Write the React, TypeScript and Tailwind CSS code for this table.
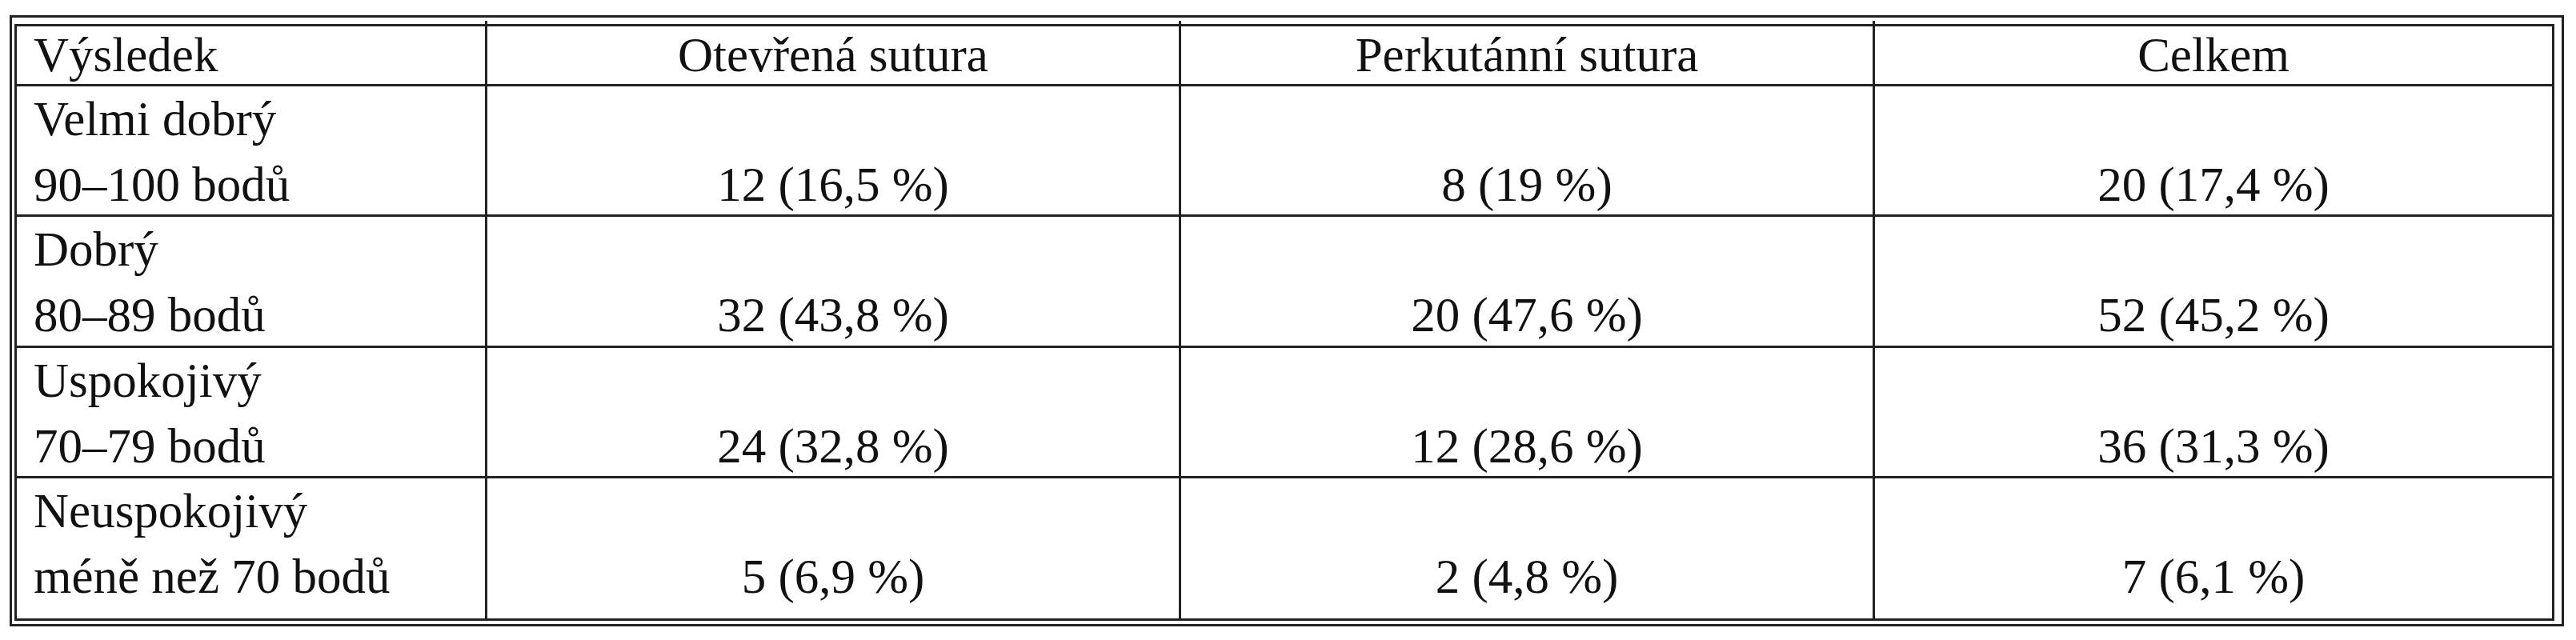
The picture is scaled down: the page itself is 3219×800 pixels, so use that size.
import { Fragment } from 'react'

type Row = {
  label: [string, string]
  values: string[]
}

const headers = ['Otevřená sutura', 'Perkutánní sutura', 'Celkem']

const rows: Row[] = [
  { label: ['Velmi dobrý', '90–100 bodů'], values: ['12 (16,5 %)', '8 (19 %)', '20 (17,4 %)'] },
  { label: ['Dobrý', '80–89 bodů'], values: ['32 (43,8 %)', '20 (47,6 %)', '52 (45,2 %)'] },
  { label: ['Uspokojivý', '70–79 bodů'], values: ['24 (32,8 %)', '12 (28,6 %)', '36 (31,3 %)'] },
  { label: ['Neuspokojivý', 'méně než 70 bodů'], values: ['5 (6,9 %)', '2 (4,8 %)', '7 (6,1 %)'] },
]

export default function App() {
  return (
    <div className="w-[3219px] h-[800px] bg-white pt-[19px] pl-[12px] font-['Liberation_Serif',serif] text-[61px] text-[#111]">
      {/* double frame: outer line, white gap, inner table */}
      <div className="w-[3192px] border-[3px] border-[#222] pt-[8px] pl-[3px] pr-[9px] pb-[4px]">
        <div className="grid grid-cols-[585px_864px_864px_846px] grid-rows-[72px_160px_161px_160px_175px] gap-[3px] border-[3px] border-[#222] bg-[#222]">
          <div className="bg-white pl-[21px] leading-[72px]">Výsledek</div>
          {headers.map((h) => (
            <div key={h} className="relative bg-white text-center leading-[72px]">
              <span className="absolute -top-[7px] -left-[3px] w-[3px] h-[4px] bg-[#222]" />
              {h}
            </div>
          ))}

          {rows.map((row) => (
            <Fragment key={row.label[0]}>
              <div className="bg-white pl-[21px] leading-[82px]">
                <div>{row.label[0]}</div>
                <div>{row.label[1]}</div>
              </div>
              {row.values.map((v, i) => (
                <div key={i} className="bg-white pt-[82px] text-center leading-[82px]">
                  {v}
                </div>
              ))}
            </Fragment>
          ))}
        </div>
      </div>
    </div>
  )
}
